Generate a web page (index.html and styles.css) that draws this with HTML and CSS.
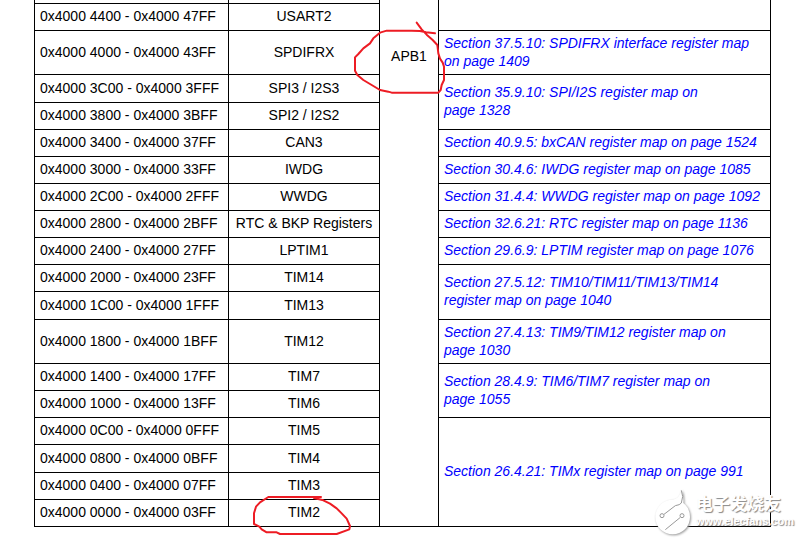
FILE: index.html
```html
<!DOCTYPE html>
<html lang="en">

<head>
  <meta charset="UTF-8">
  <meta name="viewport" content="width=device-width, initial-scale=1.0">
  <title>APB1 register boundary addresses</title>

  <link rel="stylesheet" href="styles.css">
</head>

<body>
  <div class="page">
    <table class="memory-map">
      <colgroup>
        <col class="col-address">
        <col class="col-peripheral">
        <col class="col-bus">
        <col>
      </colgroup>
      <tbody>
        <tr class="cut">
          <td></td>
          <td></td>
          <td class="bus" rowspan="19">APB1</td>
          <td rowspan="2"></td>
        </tr>
        <tr>
          <td>0x4000 4400 - 0x4000 47FF</td>
          <td class="name">USART2</td>
        </tr>
        <tr class="double">
          <td>0x4000 4000 - 0x4000 43FF</td>
          <td class="name">SPDIFRX</td>
          <td><a href="#">Section 37.5.10: SPDIFRX interface register map<br>on page 1409</a></td>
        </tr>
        <tr class="loose">
          <td>0x4000 3C00 - 0x4000 3FFF</td>
          <td class="name">SPI3 / I2S3</td>
          <td rowspan="2"><a href="#">Section 35.9.10: SPI/I2S register map on<br>page 1328</a></td>
        </tr>
        <tr>
          <td>0x4000 3800 - 0x4000 3BFF</td>
          <td class="name">SPI2 / I2S2</td>
        </tr>
        <tr>
          <td>0x4000 3400 - 0x4000 37FF</td>
          <td class="name">CAN3</td>
          <td><a href="#">Section 40.9.5: bxCAN register map on page 1524</a></td>
        </tr>
        <tr>
          <td>0x4000 3000 - 0x4000 33FF</td>
          <td class="name">IWDG</td>
          <td><a href="#">Section 30.4.6: IWDG register map on page 1085</a></td>
        </tr>
        <tr>
          <td>0x4000 2C00 - 0x4000 2FFF</td>
          <td class="name">WWDG</td>
          <td><a href="#">Section 31.4.4: WWDG register map on page 1092</a></td>
        </tr>
        <tr>
          <td>0x4000 2800 - 0x4000 2BFF</td>
          <td class="name">RTC &amp; BKP Registers</td>
          <td><a href="#">Section 32.6.21: RTC register map on page 1136</a></td>
        </tr>
        <tr>
          <td>0x4000 2400 - 0x4000 27FF</td>
          <td class="name">LPTIM1</td>
          <td><a href="#">Section 29.6.9: LPTIM register map on page 1076</a></td>
        </tr>
        <tr>
          <td>0x4000 2000 - 0x4000 23FF</td>
          <td class="name">TIM14</td>
          <td rowspan="2"><a href="#">Section 27.5.12: TIM10/TIM11/TIM13/TIM14<br>register map on page 1040</a></td>
        </tr>
        <tr class="loose">
          <td>0x4000 1C00 - 0x4000 1FFF</td>
          <td class="name">TIM13</td>
        </tr>
        <tr class="double">
          <td>0x4000 1800 - 0x4000 1BFF</td>
          <td class="name">TIM12</td>
          <td><a href="#">Section 27.4.13: TIM9/TIM12 register map on<br>page 1030</a></td>
        </tr>
        <tr>
          <td>0x4000 1400 - 0x4000 17FF</td>
          <td class="name">TIM7</td>
          <td rowspan="2"><a href="#">Section 28.4.9: TIM6/TIM7 register map on<br>page 1055</a></td>
        </tr>
        <tr>
          <td>0x4000 1000 - 0x4000 13FF</td>
          <td class="name">TIM6</td>
        </tr>
        <tr>
          <td>0x4000 0C00 - 0x4000 0FFF</td>
          <td class="name">TIM5</td>
          <td rowspan="4"><a href="#">Section 26.4.21: TIMx register map on page 991</a></td>
        </tr>
        <tr class="loose">
          <td>0x4000 0800 - 0x4000 0BFF</td>
          <td class="name">TIM4</td>
        </tr>
        <tr>
          <td>0x4000 0400 - 0x4000 07FF</td>
          <td class="name">TIM3</td>
        </tr>
        <tr>
          <td>0x4000 0000 - 0x4000 03FF</td>
          <td class="name">TIM2</td>
        </tr>
      </tbody>
    </table>

    <!-- red pen marks -->
    <svg class="mark mark-bus" viewBox="402 60 276 225" aria-hidden="true">
      <path d="M590 68 L605 88 L620 104 L638 120 L652 135 L655 160 L660 176 L668 188 L672 200 L672 240 L665 255 L662 270 L655 278 L515 278 L505 275 L480 270 L450 252 L430 240 L412 225 L405 212 L405 172 L415 162 L430 145 L450 130 L460 115 L480 98 L500 92 L575 92 L600 93 L618 97 L645 100" />
    </svg>
    <svg class="mark mark-tim2" viewBox="756 405 300 123" aria-hidden="true">
      <path d="M963 411 L805 411 L780 427 L768 440 L762 460 L762 492 L778 500 L785 508 L800 517 L830 517 L840 522 L1010 522 L1048 508 L1050 498 L1040 476 L1025 460 L1010 445 L990 431 L970 421 L942 414" />
    </svg>

    <div class="watermark">
      <svg class="logo" viewBox="0 0 114 138" aria-hidden="true">
        <path class="disc" d="M82 4 Q90 20 88 42 Q108 58 108 84 A52 52 0 1 1 56 32 Q76 30 82 4 Z" />
        <path class="trace" d="M82 4 Q90 22 82 42 Q78 48 64 50 L30 76" />
        <path class="trace" d="M78 86 L34 122" />
        <circle class="trace" cx="24" cy="80" r="6" />
        <circle class="trace" cx="84" cy="80" r="6" />
      </svg>
      <div class="brand">
        <span class="brand-name" lang="zh">电子发烧友</span>
        <span class="brand-url">www.elecfans.com</span>
      </div>
    </div>
  </div>
</body>

</html>
```
FILE: styles.css
```css
body {
  margin: 0;
  background-color: #ffffff;
  color: #000000;
  font-family: "Liberation Sans", Arial, sans-serif;
  font-size: 14px;
  line-height: 18px;
}

.page {
  position: relative;
  padding: 0 31px 14px 34px;
}

.memory-map {
  table-layout: fixed;
  border-collapse: separate;
  border-spacing: 0;
  border-left: 1px solid #000000;
  width: 100%;
}

.col-address {
  width: 194px;
}

.col-peripheral {
  width: 151px;
}

.col-bus {
  width: 59px;
}

.memory-map tr {
  height: 27px;
}

.memory-map .cut {
  height: 4px;
}

.memory-map .loose {
  height: 28px;
}

.memory-map .double {
  height: 44px;
}

.memory-map td {
  border-right: 1px solid #000000;
  border-bottom: 1px solid #000000;
  padding: 0 0 2px 5px;
  white-space: nowrap;
}

.memory-map .name {
  padding: 0 0 2px;
  text-align: center;
}

.memory-map .bus {
  padding: 47px 0 0;
  text-align: center;
  vertical-align: top;
}

.memory-map a {
  color: #0000ff;
  font-style: italic;
  text-decoration: none;
}

.mark {
  position: absolute;
  fill: none;
  stroke: #ed1c24;
  stroke-width: 6;
  stroke-linejoin: round;
  stroke-linecap: round;
}

.mark-bus {
  top: 20px;
  left: 354px;
  width: 92px;
}

.mark-tim2 {
  top: 495px;
  left: 252px;
  width: 100px;
}

.watermark {
  position: absolute;
  right: 8px;
  bottom: 6px;
  display: flex;
  align-items: center;
  gap: 4px;
  color: #ffffff;
}

.logo {
  width: 38px;
  height: 46px;
  overflow: visible;
  filter: drop-shadow(1px 1px 1px #999999);
}

.disc {
  fill: #ffffff;
}

.trace {
  fill: none;
  stroke: #999999;
  stroke-width: 3;
}

.brand {
  display: flex;
  flex-direction: column;
  padding-bottom: 2px;
  text-shadow: 1px 1px 1px #888888;
}

.brand-name {
  font-family: "Liberation Sans", "Noto Sans CJK SC", sans-serif;
  font-size: 17px;
  font-weight: bold;
  line-height: 20px;
}

.brand-url {
  font-size: 11px;
  font-weight: bold;
  line-height: 12px;
}
```
